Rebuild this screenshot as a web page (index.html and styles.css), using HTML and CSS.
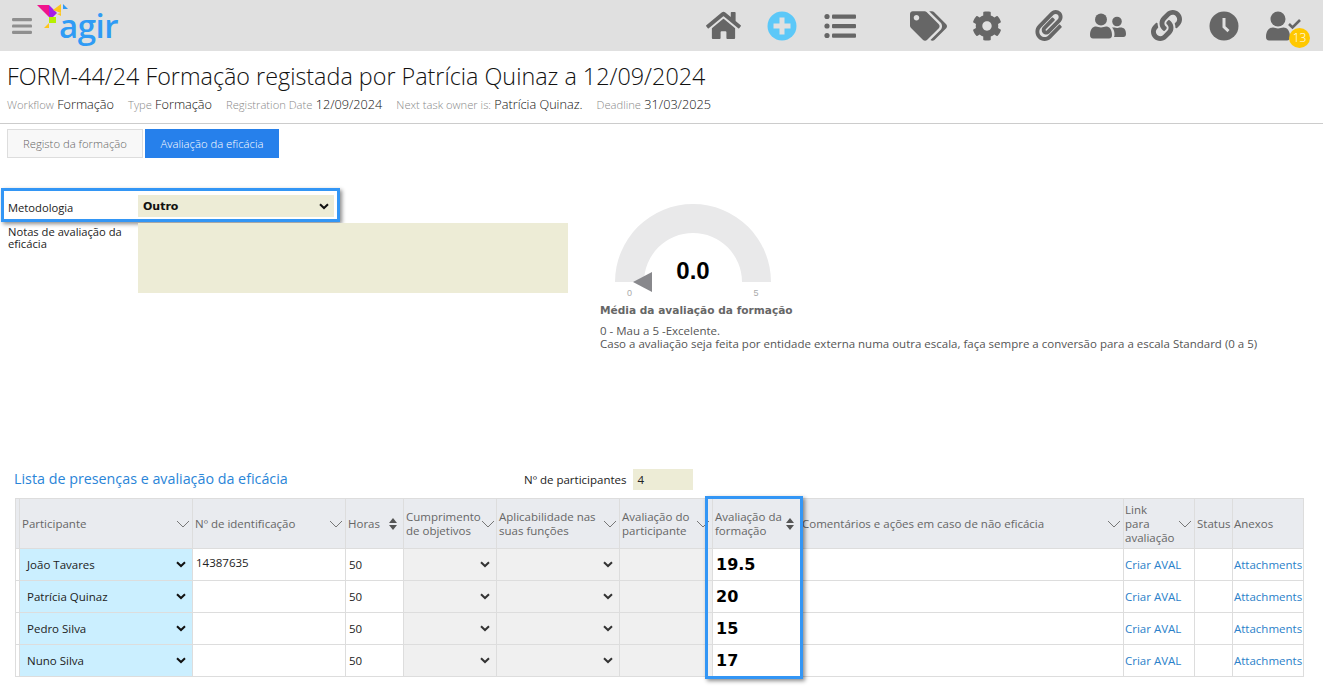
FILE: index.html
```html
<!DOCTYPE html>
<html lang="pt">
<head>
<meta charset="utf-8">
<title>FORM-44/24</title>
<link rel="stylesheet" href="styles.css">
</head>
<body>
<header class="topbar">
  <div class="brand">
    <svg class="burger" viewBox="0 0 20 16"><rect y="0" width="20" height="3.2" rx="1.2"/><rect y="6.4" width="20" height="3.2" rx="1.2"/><rect y="12.8" width="20" height="3.2" rx="1.2"/></svg>
    <div class="logo">
      <svg class="logo-bird" viewBox="0 0 34 32">
        <polygon fill="#f0148c" points="0,1 12,1 12,13"/>
        <polygon fill="#a61ee8" points="12,1 20,9 12,17"/>
        <polygon fill="#ffc61a" points="16,6 24,0 24,9"/>
        <polygon fill="#2f9bf5" points="26,0 31,5 26,5"/>
        <polygon fill="#ffc61a" points="20,10 24,9 24,12"/>
        <polygon fill="#b6f000" points="12,13 19,13 19,19 12,19"/>
        <polygon fill="#ffc61a" points="7,24 12,19 12,24"/>
      </svg>
      <span class="logo-text">agir</span>
    </div>
  </div>
  <nav class="nav">
    <svg class="ic ic-home" viewBox="0 0 576 512"><path d="M280.37 148.26L96 300.11V464a16 16 0 0 0 16 16l112.06-.29a16 16 0 0 0 15.92-16V368a16 16 0 0 1 16-16h64a16 16 0 0 1 16 16v95.64a16 16 0 0 0 16 16.05L464 480a16 16 0 0 0 16-16V300L295.67 148.26a12.19 12.19 0 0 0-15.3 0zM571.6 251.47L488 182.56V44.05a12 12 0 0 0-12-12h-56a12 12 0 0 0-12 12v72.61L318.47 43a48 48 0 0 0-61 0L4.34 251.47a12 12 0 0 0-1.6 16.9l25.5 31A12 12 0 0 0 45.15 301l235.22-193.74a12.19 12.19 0 0 1 15.3 0L530.9 301a12 12 0 0 0 16.9-1.6l25.5-31a12 12 0 0 0-1.7-16.93z"/></svg>
    <svg class="ic ic-plus" viewBox="0 0 30 30"><circle cx="15" cy="15" r="14.5" fill="#5cc8f8"/><path fill="#e0e0e0" d="M12.5 6.5h5v6h6v5h-6v6h-5v-6h-6v-5h6z"/></svg>
    <svg class="ic ic-list" viewBox="0 0 32 26"><circle cx="3" cy="3.5" r="2.6"/><circle cx="3" cy="13" r="2.6"/><circle cx="3" cy="22.5" r="2.6"/><rect x="8" y="1.5" width="24" height="4.2" rx="1"/><rect x="8" y="11" width="24" height="4.2" rx="1"/><rect x="8" y="20.5" width="24" height="4.2" rx="1"/></svg>
    <svg class="ic ic-tags" viewBox="0 0 640 512"><path d="M497.941 225.941L286.059 14.059A48 48 0 0 0 252.118 0H48C21.49 0 0 21.49 0 48v204.118a48 48 0 0 0 14.059 33.941l211.882 211.882c18.744 18.745 49.136 18.746 67.882 0l204.118-204.118c18.745-18.745 18.745-49.137 0-67.882zM112 160c-26.51 0-48-21.49-48-48s21.49-48 48-48 48 21.49 48 48-21.49 48-48 48zm513.941 133.823L421.823 497.941c-18.745 18.745-49.137 18.745-67.882 0l-.36-.36L527.64 323.522c16.999-16.999 26.36-39.6 26.36-63.64s-9.362-46.641-26.36-63.64L331.397 0h48.721a48 48 0 0 1 33.941 14.059l211.882 211.882c18.745 18.745 18.745 49.137 0 67.882z"/></svg>
    <svg class="ic ic-cog" viewBox="0 0 512 512"><path d="M487.4 315.7l-42.6-24.6c4.3-23.2 4.3-47 0-70.2l42.6-24.6c4.9-2.8 7.1-8.6 5.5-14-11.1-35.6-30-67.8-54.7-94.6-3.8-4.1-10-5.1-14.8-2.3L380.8 110c-17.9-15.4-38.5-27.3-60.8-35.1V25.8c0-5.6-3.9-10.5-9.4-11.7-36.7-8.2-74.3-7.8-109.2 0-5.5 1.2-9.4 6.1-9.4 11.7V75c-22.2 7.9-42.8 19.8-60.8 35.1L88.7 85.5c-4.9-2.8-11-1.9-14.8 2.3-24.7 26.7-43.6 58.9-54.7 94.6-1.7 5.4.6 11.2 5.5 14L67.3 221c-4.3 23.2-4.3 47 0 70.2l-42.6 24.6c-4.9 2.8-7.1 8.6-5.5 14 11.1 35.6 30 67.8 54.7 94.6 3.8 4.1 10 5.1 14.8 2.3l42.6-24.6c17.9 15.4 38.5 27.3 60.8 35.1v49.2c0 5.6 3.9 10.5 9.4 11.7 36.7 8.2 74.3 7.8 109.2 0 5.5-1.2 9.4-6.1 9.4-11.7v-49.2c22.2-7.9 42.8-19.8 60.8-35.1l42.6 24.6c4.9 2.8 11 1.9 14.8-2.3 24.7-26.7 43.6-58.9 54.7-94.6 1.5-5.5-.7-11.3-5.6-14.1zM256 336c-44.1 0-80-35.9-80-80s35.9-80 80-80 80 35.9 80 80-35.9 80-80 80z"/></svg>
    <svg class="ic ic-clip" viewBox="0 0 448 512"><path d="M43.246 466.142c-58.43-60.289-57.341-157.511 1.386-217.581L254.392 34c44.316-45.332 116.351-45.336 160.671 0 43.89 44.894 43.943 117.329 0 162.276L232.214 383.128c-29.855 30.537-78.633 30.111-107.982-.998-28.275-29.97-27.368-77.473 1.452-106.953l143.743-146.835c6.182-6.314 16.312-6.422 22.626-.241l22.861 22.379c6.315 6.182 6.422 16.312.241 22.626L171.427 319.927c-4.932 5.045-5.236 13.428-.648 18.292 4.372 4.634 11.245 4.711 15.688.165l182.849-186.851c19.613-20.062 19.613-52.725-.011-72.798-19.189-19.627-49.957-19.637-69.154 0L90.39 293.295c-34.763 35.56-35.299 93.12-1.191 128.313 34.01 35.093 88.985 35.137 123.058.286l172.06-175.999c6.177-6.319 16.307-6.433 22.626-.256l22.877 22.364c6.319 6.177 6.434 16.307.256 22.626l-172.06 175.998c-59.576 60.938-155.943 60.216-214.77-.485z"/></svg>
    <svg class="ic ic-users" viewBox="0 0 36 26"><circle cx="11" cy="6.5" r="6"/><path d="M0 22c0-6 3-8.500 6-8.500 1.500 0 3 1 5 1s3.500-1 5-1c3 0 6 2.500 6 8.500 0 2-1 3.500-3 3.500H3c-2 0-3-1.500-3-3.500z"/><circle cx="27" cy="8.500" r="4.800"/><path d="M24.500 14.500c.8.300 1.500.500 2.500.500s2-.5 3.500-.5c3.500 0 5.500 2 5.500 6.500 0 2-1 3-2.500 3H24c.5-1 .5-2 .5-3 0-3-1-5-2.500-6.500z"/></svg>
    <svg class="ic ic-link" viewBox="0 0 512 512"><path d="M326.612 185.391c59.747 59.809 58.927 155.698.36 214.59-.11.12-.24.25-.36.37l-67.2 67.2c-59.27 59.27-155.699 59.262-214.96 0-59.27-59.26-59.27-155.7 0-214.96l37.106-37.106c9.84-9.84 26.786-3.3 27.294 10.606.648 17.722 3.826 35.527 9.69 52.721 1.986 5.822.567 12.262-3.783 16.612l-13.087 13.087c-28.026 28.026-28.905 73.66-1.155 101.96 28.024 28.579 74.086 28.749 102.325.51l67.2-67.19c28.191-28.191 28.073-73.757 0-101.83-3.701-3.694-7.429-6.564-10.341-8.569a16.037 16.037 0 0 1-6.947-12.606c-.396-10.567 3.348-21.456 11.698-29.806l21.054-21.055c5.521-5.521 14.182-6.199 20.584-1.731a152.482 152.482 0 0 1 20.522 17.197zM467.547 44.449c-59.261-59.262-155.69-59.27-214.96 0l-67.2 67.2c-.12.12-.25.25-.36.37-58.566 58.892-59.387 154.781.36 214.59a152.454 152.454 0 0 0 20.521 17.196c6.402 4.468 15.064 3.789 20.584-1.731l21.054-21.055c8.35-8.35 12.094-19.239 11.698-29.806a16.037 16.037 0 0 0-6.947-12.606c-2.912-2.005-6.64-4.875-10.341-8.569-28.073-28.073-28.191-73.639 0-101.83l67.2-67.19c28.239-28.239 74.3-28.069 102.325.51 27.75 28.3 26.872 73.934-1.155 101.96l-13.087 13.087c-4.35 4.35-5.769 10.79-3.783 16.612 5.864 17.194 9.042 34.999 9.69 52.721.509 13.906 17.454 20.446 27.294 10.606l37.106-37.106c59.271-59.259 59.271-155.699.001-214.959z"/></svg>
    <svg class="ic ic-clock" viewBox="0 0 30 30"><circle cx="15" cy="15" r="14.500"/><path d="M13.500 7h3v8.200l4 3.800-2 2.200-5-4.800z" fill="#e0e0e0"/></svg>
    <div class="usertask">
      <svg class="ic-user" viewBox="0 0 36 30"><circle cx="12" cy="8" r="7.500"/><path d="M0 26c0-7 4-9.500 7-9.500 2 0 3 1 5 1s3.500-1 5.500-1c3.500 0 6.500 3 6.500 9.500 0 2-1 3.500-3 3.500H3c-2 0-3-1.500-3-3.500z"/><path d="M23 13l3.500 3.500L34 9" fill="none" stroke="#666" stroke-width="2.600"/></svg>
      <span class="badge">13</span>
    </div>
  </nav>
</header>

<section class="heading">
  <h1 class="title">FORM-44/24 Formação registada por Patrícia Quinaz a 12/09/2024</h1>
  <p class="meta">
    <span class="meta-item"><span class="meta-key">Workflow</span> Formação</span>
    <span class="meta-item"><span class="meta-key">Type</span> Formação</span>
    <span class="meta-item"><span class="meta-key">Registration Date</span> 12/09/2024</span>
    <span class="meta-item"><span class="meta-key">Next task owner is:</span> Patrícia Quinaz.</span>
    <span class="meta-item"><span class="meta-key">Deadline</span> 31/03/2025</span>
  </p>
</section>

<div class="tabs">
  <button class="tab">Registo da formação</button>
  <button class="tab tab-active">Avaliação da eficácia</button>
</div>

<section class="evaluation">
  <div class="form-col">
    <div class="form-row form-row-method">
      <label class="form-label">Metodologia</label>
      <div class="field-select">
        <span>Outro</span>
        <svg class="chev" viewBox="0 0 10 7"><path d="M1 1.200l4 3.800 4-3.800" fill="none" stroke="#111" stroke-width="2"/></svg>
      </div>
      <span class="hl hl-method"></span>
    </div>
    <div class="form-row">
      <label class="form-label form-label-wrap">Notas de avaliação da eficácia</label>
      <div class="field-notes"></div>
    </div>
  </div>
  <div class="gauge-col">
    <svg class="gauge" viewBox="0 0 240 92">
      <path d="M15 80a78 78 0 0 1 156 0h-29a49 49 0 0 0-98 0z" fill="#e9e9ea"/>
      <polygon points="15,80.500 44,80.500 54,68 33,81" fill="#ffffff"/>
      <polygon points="33,80 52,70 52,90" fill="#88888c"/>
      <text class="gauge-value" x="93" y="77" text-anchor="middle">0.0</text>
      <text class="gauge-tick" x="29.500" y="94" text-anchor="middle">0</text>
      <text class="gauge-tick" x="156" y="94" text-anchor="middle">5</text>
    </svg>
    <div class="gauge-title">Média da avaliação da formação</div>
    <p class="gauge-note">0 - Mau a 5 -Excelente.<br>Caso a avaliação seja feita por entidade externa numa outra escala, faça sempre a conversão para a escala Standard (0 a 5)</p>
  </div>
</section>

<section class="list-head">
  <h2 class="list-title">Lista de presenças e avaliação da eficácia</h2>
  <div class="count">
    <span>Nº de participantes</span>
    <span class="count-field">4</span>
  </div>
</section>

<div class="table-wrap">
  <table class="grid">
    <colgroup>
      <col class="c-sel"><col class="c-part"><col class="c-id"><col class="c-hours"><col class="c-obj"><col class="c-apl"><col class="c-ava"><col class="c-form"><col class="c-com"><col class="c-link"><col class="c-status"><col class="c-att">
    </colgroup>
    <thead>
      <tr>
        <th></th>
        <th><div class="th-in"><span>Participante</span><svg class="th-chev" viewBox="0 0 14 8"><path d="M1 1l6 6 6-6" fill="none" stroke="#777"/></svg></div></th>
        <th><div class="th-in"><span>Nº de identificação</span><svg class="th-chev" viewBox="0 0 14 8"><path d="M1 1l6 6 6-6" fill="none" stroke="#777"/></svg></div></th>
        <th><div class="th-in"><span>Horas</span><svg class="th-sort" viewBox="0 0 8 12"><path d="M4 0l4 5H0zM4 12L0 7h8z" fill="#555"/></svg></div></th>
        <th><div class="th-in"><span>Cumprimento<br>de objetivos</span><svg class="th-chev" viewBox="0 0 14 8"><path d="M1 1l6 6 6-6" fill="none" stroke="#777"/></svg></div></th>
        <th><div class="th-in"><span>Aplicabilidade nas<br>suas funções</span><svg class="th-chev" viewBox="0 0 14 8"><path d="M1 1l6 6 6-6" fill="none" stroke="#777"/></svg></div></th>
        <th><div class="th-in"><span>Avaliação do<br>participante</span><svg class="th-chev" viewBox="0 0 14 8"><path d="M1 1l6 6 6-6" fill="none" stroke="#777"/></svg></div></th>
        <th><div class="th-in"><span>Avaliação da<br>formação</span><svg class="th-sort" viewBox="0 0 8 12"><path d="M4 0l4 5H0zM4 12L0 7h8z" fill="#555"/></svg></div></th>
        <th class="th-tight"><div class="th-in"><span>Comentários e ações em caso de não eficácia</span><svg class="th-chev" viewBox="0 0 14 8"><path d="M1 1l6 6 6-6" fill="none" stroke="#777"/></svg></div></th>
        <th class="th-tight"><div class="th-in"><span>Link<br>para<br>avaliação</span><svg class="th-chev" viewBox="0 0 14 8"><path d="M1 1l6 6 6-6" fill="none" stroke="#777"/></svg></div></th>
        <th>Status</th>
        <th class="th-tight">Anexos</th>
      </tr>
    </thead>
    <tbody>
      <tr>
        <td></td>
        <td class="td-part"><div class="sel"><span>João Tavares</span><svg class="chev" viewBox="0 0 10 7"><path d="M1 1.200l4 3.800 4-3.800" fill="none" stroke="#111" stroke-width="2"/></svg></div></td>
        <td class="td-top">14387635</td><td>50</td>
        <td class="td-gray"><div class="sel sel-end"><svg class="chev" viewBox="0 0 10 7"><path d="M1 1.200l4 3.800 4-3.800" fill="none" stroke="#333" stroke-width="2"/></svg></div></td>
        <td class="td-gray"><div class="sel sel-end"><svg class="chev" viewBox="0 0 10 7"><path d="M1 1.200l4 3.800 4-3.800" fill="none" stroke="#333" stroke-width="2"/></svg></div></td>
        <td class="td-gray"></td>
        <td class="td-score">19.5</td><td></td>
        <td class="td-link"><a class="lnk" href="#">Criar AVAL</a></td><td></td><td class="td-link"><a class="lnk" href="#">Attachments</a></td>
      </tr>
      <tr>
        <td></td>
        <td class="td-part"><div class="sel"><span>Patrícia Quinaz</span><svg class="chev" viewBox="0 0 10 7"><path d="M1 1.200l4 3.800 4-3.800" fill="none" stroke="#111" stroke-width="2"/></svg></div></td>
        <td></td><td>50</td>
        <td class="td-gray"><div class="sel sel-end"><svg class="chev" viewBox="0 0 10 7"><path d="M1 1.200l4 3.800 4-3.800" fill="none" stroke="#333" stroke-width="2"/></svg></div></td>
        <td class="td-gray"><div class="sel sel-end"><svg class="chev" viewBox="0 0 10 7"><path d="M1 1.200l4 3.800 4-3.800" fill="none" stroke="#333" stroke-width="2"/></svg></div></td>
        <td class="td-gray"></td>
        <td class="td-score">20</td><td></td>
        <td class="td-link"><a class="lnk" href="#">Criar AVAL</a></td><td></td><td class="td-link"><a class="lnk" href="#">Attachments</a></td>
      </tr>
      <tr>
        <td></td>
        <td class="td-part"><div class="sel"><span>Pedro Silva</span><svg class="chev" viewBox="0 0 10 7"><path d="M1 1.200l4 3.800 4-3.800" fill="none" stroke="#111" stroke-width="2"/></svg></div></td>
        <td></td><td>50</td>
        <td class="td-gray"><div class="sel sel-end"><svg class="chev" viewBox="0 0 10 7"><path d="M1 1.200l4 3.800 4-3.800" fill="none" stroke="#333" stroke-width="2"/></svg></div></td>
        <td class="td-gray"><div class="sel sel-end"><svg class="chev" viewBox="0 0 10 7"><path d="M1 1.200l4 3.800 4-3.800" fill="none" stroke="#333" stroke-width="2"/></svg></div></td>
        <td class="td-gray"></td>
        <td class="td-score">15</td><td></td>
        <td class="td-link"><a class="lnk" href="#">Criar AVAL</a></td><td></td><td class="td-link"><a class="lnk" href="#">Attachments</a></td>
      </tr>
      <tr>
        <td></td>
        <td class="td-part"><div class="sel"><span>Nuno Silva</span><svg class="chev" viewBox="0 0 10 7"><path d="M1 1.200l4 3.800 4-3.800" fill="none" stroke="#111" stroke-width="2"/></svg></div></td>
        <td></td><td>50</td>
        <td class="td-gray"><div class="sel sel-end"><svg class="chev" viewBox="0 0 10 7"><path d="M1 1.200l4 3.800 4-3.800" fill="none" stroke="#333" stroke-width="2"/></svg></div></td>
        <td class="td-gray"><div class="sel sel-end"><svg class="chev" viewBox="0 0 10 7"><path d="M1 1.200l4 3.800 4-3.800" fill="none" stroke="#333" stroke-width="2"/></svg></div></td>
        <td class="td-gray"></td>
        <td class="td-score">17</td><td></td>
        <td class="td-link"><a class="lnk" href="#">Criar AVAL</a></td><td></td><td class="td-link"><a class="lnk" href="#">Attachments</a></td>
      </tr>
    </tbody>
  </table>
  <span class="hl hl-score"></span>
</div>
</body>
</html>
```

FILE: styles.css
```css
* { box-sizing: border-box; }
html, body { margin: 0; padding: 0; }
body {
  width: 1323px;
  height: 699px;
  overflow: hidden;
  background: #fff;
  color: #222;
  font-family: "Open Sans", "Noto Sans", sans-serif;
  font-size: 11.5px;
}

/* top bar */
.topbar {
  height: 51px;
  background: #e0e0e0;
  display: flex;
  align-items: flex-start;
  justify-content: space-between;
}
.brand { display: flex; align-items: flex-start; padding-left: 12px; }
.burger { width: 20px; height: 16px; margin-top: 18px; fill: #8f8f8f; }
.logo { position: relative; width: 90px; height: 51px; margin-left: 5px; }
.logo-bird { position: absolute; left: 0; top: 4px; width: 34px; height: 32px; }
.logo-text {
  position: absolute;
  left: 22px;
  top: 2px;
  color: #2f9bf5;
  font-family: "Open Sans", sans-serif;
  font-weight: 600;
  font-size: 33px;
  line-height: 48px;
  letter-spacing: -.5px;
}
.nav { display: flex; align-items: center; height: 51px; padding-right: 20px; }
.nav svg { fill: #666; display: block; }
.ic-home { width: 35px; height: 31px; }
.ic-plus { width: 30px; height: 30px; margin-left: 26px; }
.ic-list { width: 32px; height: 26px; margin-left: 27px; }
.ic-tags { width: 37px; height: 30px; margin-left: 54px; }
.ic-cog { width: 30px; height: 30px; margin-left: 25px; }
.ic-clip { width: 28px; height: 31px; margin-left: 33px; }
.ic-users { width: 36px; height: 26px; margin-left: 27px; }
.ic-link { width: 31px; height: 31px; margin-left: 25px; }
.ic-clock { width: 30px; height: 30px; margin-left: 27px; }
.usertask { position: relative; width: 37px; height: 30px; margin-left: 27px; }
.ic-user { width: 36px; height: 30px; }
.badge {
  position: absolute;
  left: 23px;
  top: 17px;
  width: 21px;
  height: 20px;
  border-radius: 50%;
  background: #ffc800;
  color: #fff;
  font-size: 12px;
  font-weight: 300;
  line-height: 20px;
  text-align: center;
}

/* heading */
.heading { padding: 9px 7px 0; height: 73px; border-bottom: 1px solid #ccc; }
.title {
  margin: 0;
  font-size: 23.35px;
  font-weight: 300;
  line-height: 33px;
  color: #111;
  white-space: nowrap;
}
.meta {
  margin: 2px 0 0;
  display: flex;
  gap: 14px;
  font-size: 12.7px;
  font-weight: 300;
  line-height: 18px;
  color: #111;
  white-space: nowrap;
}
.meta-key { color: #8a8a8a; font-size: 11.2px; }

/* tabs */
.tabs { display: flex; gap: 2px; padding: 5px 0 0 7px; }
.tab {
  height: 29px;
  width: 136px;
  padding: 0;
  border: 1px solid #ddd;
  background: #f8f8f8;
  color: #666;
  font-family: inherit;
  font-size: 11.3px;
  font-weight: 300;
}
.tab-active { width: 134px; background: #2680eb; border-color: #2680eb; color: #fff; }

/* form */
.evaluation { display: flex; padding-top: 37px; height: 303px; }
.form-col { width: 568px; flex: none; }
.form-row { position: relative; display: flex; }
.form-row-method { height: 28px; }
.form-label {
  width: 138px;
  flex: none;
  padding: 7px 4px 0 8px;
  color: #222;
  font-size: 11.2px;
  line-height: 12px;
}
.form-label-wrap { padding-top: 3px; }
.field-select {
  width: 196px;
  height: 22px;
  padding: 0 5px;
  background: #edecd6;
  display: flex;
  align-items: center;
  justify-content: space-between;
  font-family: "DejaVu Sans", sans-serif;
  font-weight: 700;
  font-size: 11px;
  color: #111;
}
.field-notes { width: 430px; height: 70px; background: #edecd6; }
.chev { width: 10px; height: 7px; flex: none; }
.hl {
  position: absolute;
  border: 3px solid #3396f5;
  box-shadow: 2px 2px 4px rgba(0, 0, 0, .45);
  pointer-events: none;
}
.hl-method { left: 1px; top: -7px; width: 339px; height: 34px; }

/* gauge */
.gauge-col { padding-left: 32px; margin-top: 7px; }
.gauge { display: block; width: 240px; height: 92px; overflow: visible; }
.gauge-value { font-family: "Liberation Sans", sans-serif; font-weight: 700; font-size: 24px; fill: #000; }
.gauge-tick { font-family: "Liberation Sans", sans-serif; font-size: 9px; fill: #aaa; }
.gauge-title {
  margin-top: 9px;
  font-family: "DejaVu Sans", sans-serif;
  font-weight: 700;
  font-size: 10.6px;
  line-height: 14px;
  color: #666;
  white-space: nowrap;
}
.gauge-note {
  margin: 7px 0 0;
  font-size: 11.5px;
  line-height: 13px;
  color: #555;
  white-space: nowrap;
}

/* list header */
.list-head { display: flex; align-items: center; padding-left: 14px; height: 37px; }
.list-title { margin: 0 0 2px; width: 510px; color: #2a85d8; font-size: 14.3px; font-weight: 400; line-height: 20px; }
.count { display: flex; align-items: center; gap: 7px; color: #222; }
.count-field { width: 60px; height: 21px; padding-left: 4px; background: #edecd6; line-height: 22px; }

/* table */
.table-wrap { position: relative; margin: 0 0 0 15px; width: 1288px; }
.grid { table-layout: fixed; border-collapse: collapse; width: 1288px; }
.c-sel { width: 4px; }
.c-part { width: 173px; }
.c-id { width: 153px; }
.c-hours { width: 58px; }
.c-obj { width: 93px; }
.c-apl { width: 123px; }
.c-ava { width: 93px; }
.c-form { width: 88px; }
.c-com { width: 323px; }
.c-link { width: 71px; }
.c-status { width: 38px; }
.c-att { width: 71px; }
.grid th, .grid td { border: 1px solid #ddd; padding: 0 2px; overflow: hidden; white-space: nowrap; }
.grid th {
  height: 50px;
  background: #e9ebef;
  color: #666;
  font-weight: 400;
  font-size: 11.5px;
  line-height: 14px;
  text-align: left;
}
.grid th.th-tight { padding-left: 1px; }
.th-in { display: flex; align-items: center; justify-content: space-between; gap: 0; }
.th-chev { width: 14px; height: 8px; flex: none; }
.th-sort { width: 8px; height: 12px; flex: none; margin-right: 4px; }
.grid td { height: 32px; font-size: 11.5px; color: #222; padding-left: 3px; }
.grid td.td-part { background: #cbefff; padding: 0 6px 0 7px; }
.grid td.td-gray { background: #f0f0f0; padding: 0 6px 0 7px; }
.grid td.td-top { vertical-align: top; padding-top: 6px; }
.grid td.td-link { padding-left: 1px; padding-right: 0; }
.grid td.td-score { font-family: "DejaVu Sans", sans-serif; font-weight: 700; font-size: 16px; padding-left: 3px; color: #000; }
.sel { display: flex; align-items: center; justify-content: space-between; }
.sel-end { justify-content: flex-end; }
.lnk { color: #2a7fc9; text-decoration: none; }
.hl-score { left: 690px; top: -2px; width: 98px; height: 183px; }
```
